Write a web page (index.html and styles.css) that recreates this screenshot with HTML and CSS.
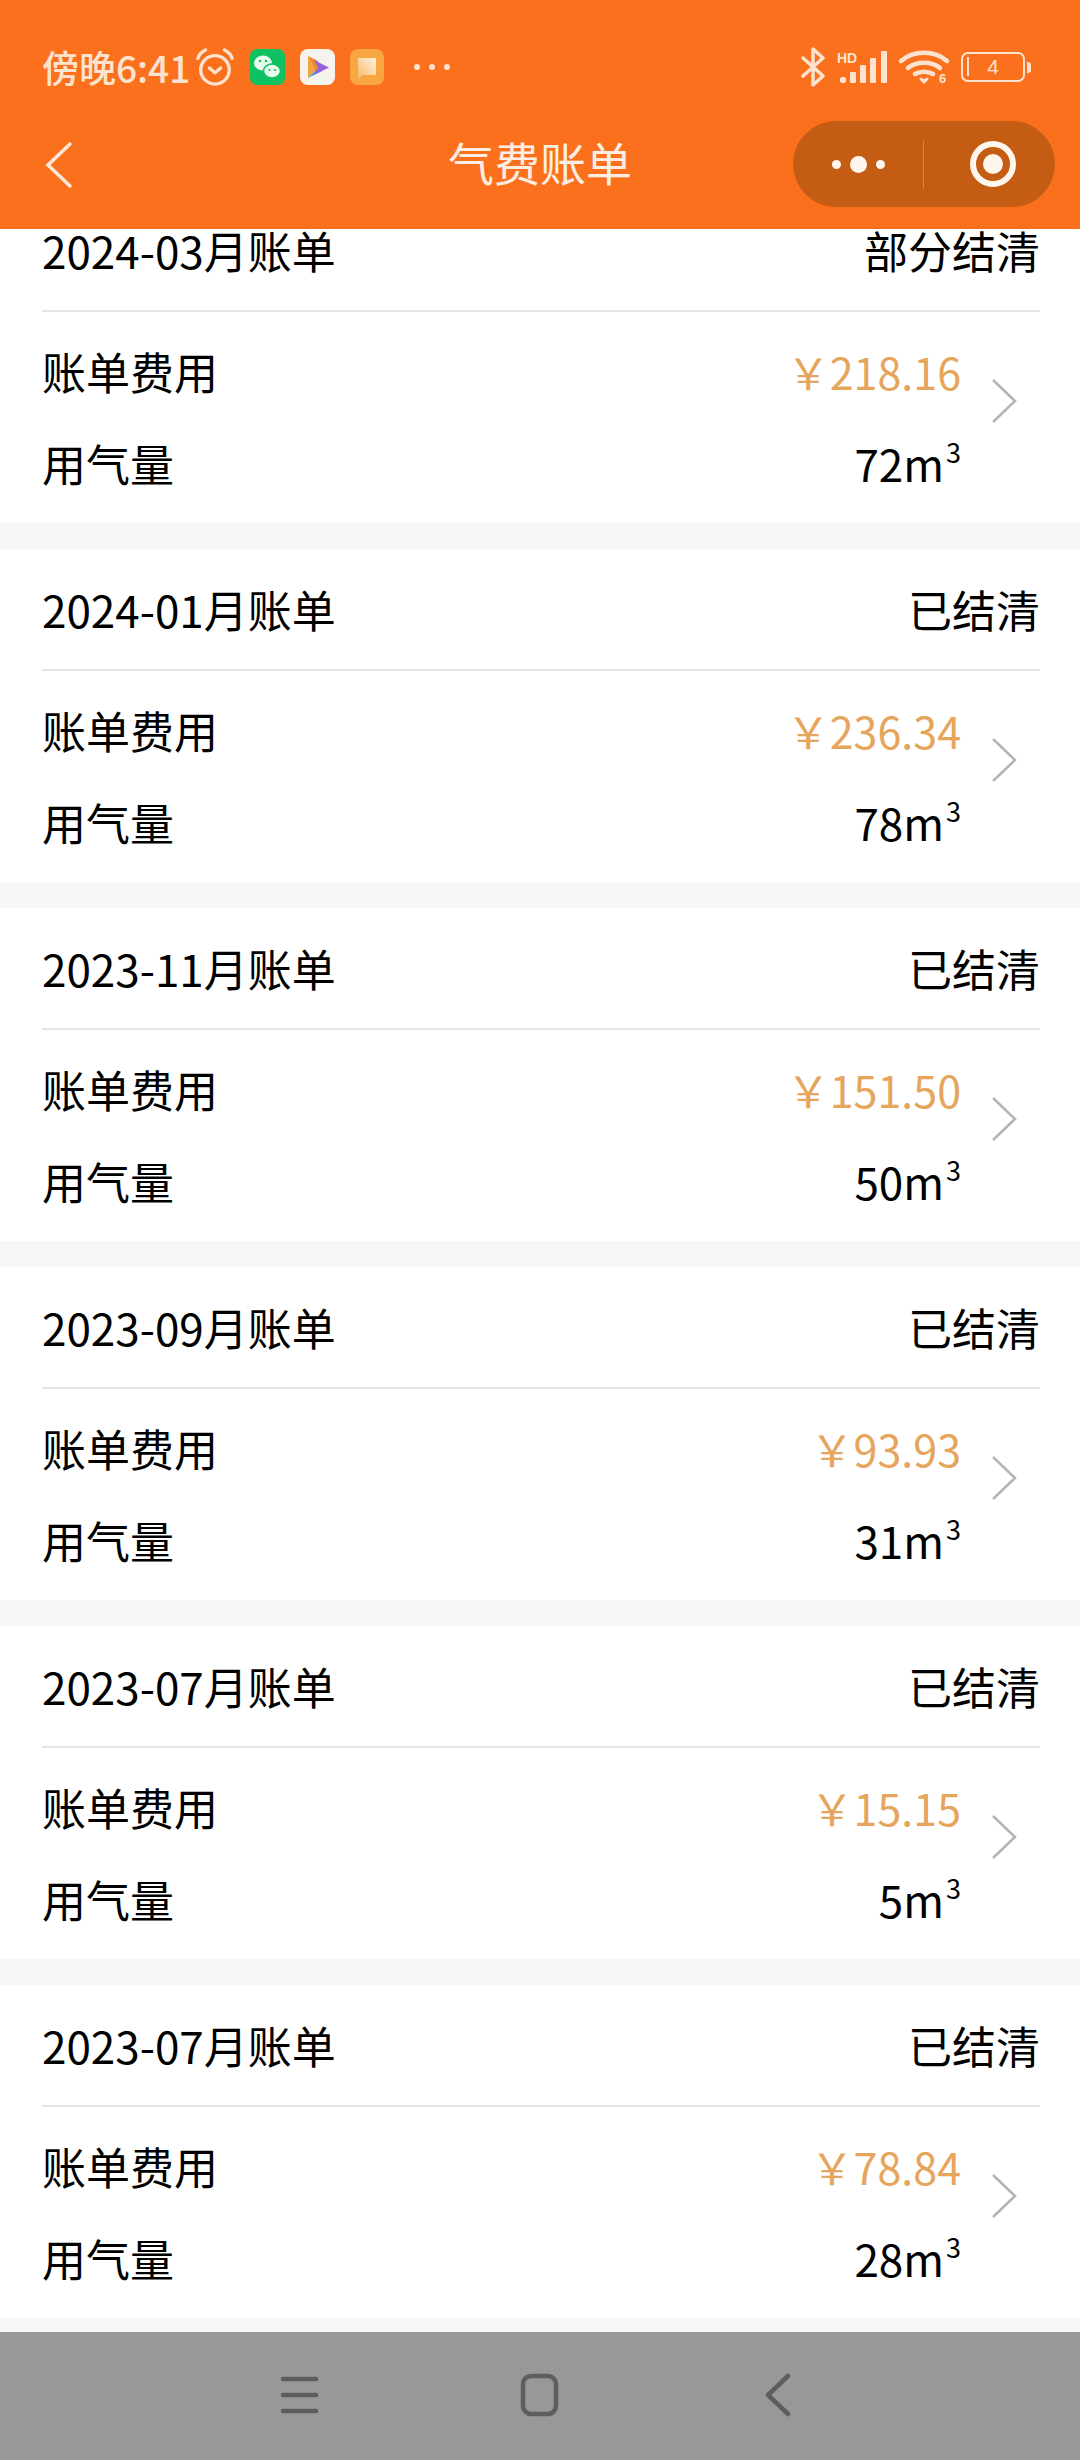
FILE: index.html
```html
<!DOCTYPE html>
<html lang="zh-CN">
<head>
   <meta charset="UTF-8">
   <title>气费账单</title>
   <link rel="stylesheet" href="styles.css">
</head>

<body>

<header class="top">
   <div class="status">
      <div class="status-left">
         <span class="time">傍晚6:41</span>
         <svg class="alarm" width="40" height="38" viewBox="0 0 42 40" fill="none" stroke="#fde3cf" stroke-width="3.500" stroke-linecap="round" stroke-linejoin="round">
            <circle cx="21" cy="23" r="15"/>
            <path d="M15 21l6 5 6-5"/>
            <path d="M3 11c1-4 4-7 8-9M39 11c-1-4-4-7-8-9"/>
         </svg>
         <svg class="app" width="35" height="36" viewBox="0 0 35 36">
            <rect width="35" height="36" rx="7" fill="#0ec161"/>
            <ellipse cx="13" cy="14" rx="9" ry="7.500" fill="#eafbef"/>
            <ellipse cx="22" cy="22" rx="8.500" ry="7" fill="#eafbef" stroke="#0ec161" stroke-width="1.500"/>
            <circle cx="10" cy="12" r="1.300" fill="#0ec161"/>
            <circle cx="16" cy="12" r="1.300" fill="#0ec161"/>
            <circle cx="19.500" cy="21" r="1.100" fill="#0ec161"/>
            <circle cx="25" cy="21" r="1.100" fill="#0ec161"/>
         </svg>
         <svg class="app" width="35" height="36" viewBox="0 0 35 36">
            <rect width="35" height="36" rx="8" fill="#f6f2ee"/>
            <path d="M8 7l10 5v10l-3 0z" fill="#f08a2c"/>
            <path d="M8 7l7 15-7 7z" fill="#f4a23c"/>
            <path d="M8 29l8-8 6 1z" fill="#3f9fe0"/>
            <path d="M14 11l15 7.500-15 7.500 4-7.500z" fill="#9763dc"/>
         </svg>
         <svg class="app" width="34" height="36" viewBox="0 0 34 36">
            <defs>
               <linearGradient id="noteFill" x1="1" y1="0" x2="0" y2="1">
                  <stop offset="0" stop-color="#fff3df"/>
                  <stop offset="1" stop-color="#f7b868"/>
               </linearGradient>
            </defs>
            <rect width="34" height="36" rx="8" fill="#f7a640"/>
            <path d="M8 9h18v17H13l-5 4z" fill="url(#noteFill)"/>
         </svg>
         <span class="more-dots"><i></i><i></i><i></i></span>
      </div>
      <div class="status-right">
         <svg width="24" height="40" viewBox="0 0 24 40" fill="none" stroke="#fde3cf" stroke-width="3.500" stroke-linejoin="round" stroke-linecap="round">
            <path d="M2 11l20 18-10 9V2l10 9L2 29"/>
         </svg>
         <svg width="50" height="34" viewBox="0 0 50 34">
            <text class="hd" x="0" y="13">HD</text>
            <g fill="#fde3cf">
               <rect x="3" y="27" width="6" height="6" rx="2"/>
               <rect x="13" y="22" width="6" height="11" rx="1"/>
               <rect x="23" y="15" width="6" height="18" rx="1"/>
               <rect x="33" y="8" width="6" height="25" rx="1"/>
               <rect x="44" y="1" width="6" height="32" rx="1"/>
            </g>
         </svg>
         <svg width="50" height="36" viewBox="0 0 50 36" fill="none" stroke="#fde3cf" stroke-width="4.500" stroke-linecap="round">
            <path d="M2 12c12-11 34-11 46 0"/>
            <path d="M9 19c8-7 24-7 32 0"/>
            <path d="M16 25c5-3 13-3 18 0"/>
            <path d="M22 30l3 3 3-3" stroke-width="3" fill="#fde3cf"/>
            <text class="wifi-six" x="40" y="34">6</text>
         </svg>
         <div class="battery">
            <div class="battery-box"><i class="battery-level"></i><span>4</span></div>
            <i class="battery-tip"></i>
         </div>
      </div>
   </div>
   <div class="nav">
      <svg class="back" width="28" height="48" viewBox="0 0 28 48" fill="none" stroke="#fde9da" stroke-width="3.500" stroke-linecap="round">
         <path d="M25 3L3 24l22 21"/>
      </svg>
      <h1 class="title">气费账单</h1>
      <div class="capsule">
         <div class="capsule-more"><i></i><i class="big"></i><i></i></div>
         <div class="capsule-close"><i></i></div>
      </div>
   </div>
</header>

<main class="content">
   <div class="list">

      <section class="bill">
         <div class="bill-head"><span>2024-03月账单</span><span>部分结清</span></div>
         <div class="bill-body">
            <div class="bill-rows">
               <div class="row"><span>账单费用</span><span class="amount">&#xFFE5;218.16</span></div>
               <div class="row"><span>用气量</span><span>72m<sup>3</sup></span></div>
            </div>
            <svg class="chevron" width="26" height="46" viewBox="0 0 26 46"><path d="M2 2l22 21L2 44"/></svg>
         </div>
      </section>

      <section class="bill">
         <div class="bill-head"><span>2024-01月账单</span><span>已结清</span></div>
         <div class="bill-body">
            <div class="bill-rows">
               <div class="row"><span>账单费用</span><span class="amount">&#xFFE5;236.34</span></div>
               <div class="row"><span>用气量</span><span>78m<sup>3</sup></span></div>
            </div>
            <svg class="chevron" width="26" height="46" viewBox="0 0 26 46"><path d="M2 2l22 21L2 44"/></svg>
         </div>
      </section>

      <section class="bill">
         <div class="bill-head"><span>2023-11月账单</span><span>已结清</span></div>
         <div class="bill-body">
            <div class="bill-rows">
               <div class="row"><span>账单费用</span><span class="amount">&#xFFE5;151.50</span></div>
               <div class="row"><span>用气量</span><span>50m<sup>3</sup></span></div>
            </div>
            <svg class="chevron" width="26" height="46" viewBox="0 0 26 46"><path d="M2 2l22 21L2 44"/></svg>
         </div>
      </section>

      <section class="bill">
         <div class="bill-head"><span>2023-09月账单</span><span>已结清</span></div>
         <div class="bill-body">
            <div class="bill-rows">
               <div class="row"><span>账单费用</span><span class="amount">&#xFFE5;93.93</span></div>
               <div class="row"><span>用气量</span><span>31m<sup>3</sup></span></div>
            </div>
            <svg class="chevron" width="26" height="46" viewBox="0 0 26 46"><path d="M2 2l22 21L2 44"/></svg>
         </div>
      </section>

      <section class="bill">
         <div class="bill-head"><span>2023-07月账单</span><span>已结清</span></div>
         <div class="bill-body">
            <div class="bill-rows">
               <div class="row"><span>账单费用</span><span class="amount">&#xFFE5;15.15</span></div>
               <div class="row"><span>用气量</span><span>5m<sup>3</sup></span></div>
            </div>
            <svg class="chevron" width="26" height="46" viewBox="0 0 26 46"><path d="M2 2l22 21L2 44"/></svg>
         </div>
      </section>

      <section class="bill">
         <div class="bill-head"><span>2023-07月账单</span><span>已结清</span></div>
         <div class="bill-body">
            <div class="bill-rows">
               <div class="row"><span>账单费用</span><span class="amount">&#xFFE5;78.84</span></div>
               <div class="row"><span>用气量</span><span>28m<sup>3</sup></span></div>
            </div>
            <svg class="chevron" width="26" height="46" viewBox="0 0 26 46"><path d="M2 2l22 21L2 44"/></svg>
         </div>
      </section>

   </div>
</main>

<footer class="softkeys">
   <svg width="40" height="40" viewBox="0 0 40 40" fill="none" stroke="#5e5e5e" stroke-width="4.500" stroke-linecap="round">
      <path d="M3 4h33M3 20h33M3 36h33"/>
   </svg>
   <svg width="40" height="44" viewBox="0 0 40 44" fill="none" stroke="#5e5e5e" stroke-width="4.500">
      <rect x="3" y="3" width="33" height="38" rx="8"/>
   </svg>
   <svg class="softkey-back" width="28" height="44" viewBox="0 0 28 44" fill="none" stroke="#5e5e5e" stroke-width="4.500" stroke-linecap="round" stroke-linejoin="round">
      <path d="M24 3L4 22l20 19"/>
   </svg>
</footer>

</body>
</html>
```

FILE: styles.css
```css
html, body {
   height: 100%;
   margin: 0;
}

body {
   display: flex;
   flex-direction: column;
   width: 1080px;
   height: 2460px;
   overflow: hidden;
   background: #f7f7f7;
   font-family: "Noto Sans CJK SC", "Noto Sans", sans-serif;
   color: #000;
}

/* orange top: phone status bar + mini program nav */
.top {
   flex: none;
   height: 229px;
   background: #fb701d;
   position: relative;
   z-index: 1;
}

.status {
   display: flex;
   justify-content: space-between;
   align-items: center;
   height: 44px;
   padding: 45px 49px 0 42px;
}

.status-left, .status-right {
   display: flex;
   align-items: center;
}

.time {
   font-size: 37px;
   font-weight: 500;
   line-height: 44px;
   color: #fde3cf;
}

.alarm {
   margin-left: 5px;
}

.app {
   margin-left: 15px;
}

.more-dots {
   display: flex;
   gap: 9px;
   margin-left: 30px;
}

.more-dots i {
   width: 6px;
   height: 6px;
   border-radius: 50%;
   background: #fde3cf;
}

.status-right {
   gap: 12px;
}

.status-right svg {
   overflow: visible;
}

.hd {
   font-family: "Liberation Sans", sans-serif;
   font-weight: bold;
   font-size: 14px;
   fill: #fde3cf;
}

.wifi-six {
   font-family: "Liberation Sans", sans-serif;
   font-weight: bold;
   font-size: 13px;
   fill: #fde3cf;
   stroke: none;
}

.battery {
   display: flex;
   align-items: center;
}

.battery-box {
   display: flex;
   align-items: center;
   justify-content: center;
   position: relative;
   box-sizing: border-box;
   width: 64px;
   height: 30px;
   border: 2.500px solid #fde3cf;
   border-radius: 7px;
   font-family: "Liberation Sans", sans-serif;
   font-size: 21px;
   color: #fde3cf;
}

.battery-level {
   position: absolute;
   left: 4px;
   top: 3px;
   width: 2px;
   height: 19px;
   background: #fde3cf;
}

.battery-tip {
   width: 4px;
   height: 11px;
   margin-left: 2px;
   border-radius: 0 3px 3px 0;
   background: #fde3cf;
}

.nav {
   display: grid;
   grid-template-columns: 1fr auto 1fr;
   align-items: center;
   height: 86px;
   margin-top: 32px;
   padding: 0 25px;
}

.back {
   margin: 2px 0 0 20px;
}

.title {
   margin: 0 0 6px;
   font-size: 46px;
   font-weight: 400;
   line-height: 80px;
   color: #fdeee3;
}

.capsule {
   justify-self: end;
   display: flex;
   align-items: center;
   width: 262px;
   height: 86px;
   border-radius: 43px;
   background: #c55c14;
}

.capsule-more {
   display: flex;
   align-items: center;
   justify-content: center;
   gap: 9px;
   width: 130px;
   height: 49px;
   border-right: 1px solid #e08440;
}

.capsule-more i {
   width: 9px;
   height: 9px;
   border-radius: 50%;
   background: #fff6ee;
}

.capsule-more .big {
   width: 17px;
   height: 17px;
}

.capsule-close {
   display: flex;
   align-items: center;
   justify-content: center;
   flex: 1;
   padding-left: 6px;
}

.capsule-close i {
   width: 20px;
   height: 20px;
   padding: 7px;
   border: 6px solid #fff6ee;
   border-radius: 50%;
   background: #fff6ee;
   background-clip: content-box;
}

/* bill list, scrolled a little under the header */
.content {
   flex: 1;
   overflow: hidden;
}

.list {
   margin-top: -39px;
}

.bill {
   height: 333px;
   margin-bottom: 26px;
   background: #fff;
   font-size: 44px;
}

.bill-head {
   display: flex;
   justify-content: space-between;
   align-items: center;
   height: 120px;
   margin: 0 40px 0 42px;
   border-bottom: 2px solid #e4e4e4;
}

.bill-body {
   display: flex;
   align-items: flex-start;
   padding: 13px 63px 0 42px;
}

.bill-rows {
   flex: 1;
}

.row {
   display: flex;
   justify-content: space-between;
   align-items: center;
   height: 92px;
}

.row sup {
   margin-left: 2px;
   font-size: 27px;
   line-height: 0;
   vertical-align: 19px;
}

.amount {
   font-size: 43px;
   color: #e6a55c;
}

.chevron {
   flex: none;
   margin: 53px 0 0 30px;
   fill: none;
   stroke: #b4b4b4;
   stroke-width: 2.500;
}

.softkeys {
   flex: none;
   display: flex;
   justify-content: center;
   align-items: center;
   gap: 200px;
   height: 126px;
   padding: 0 8px 2px 0;
   background: #989898;
}

.softkey-back {
   margin-left: 4px;
}
```
